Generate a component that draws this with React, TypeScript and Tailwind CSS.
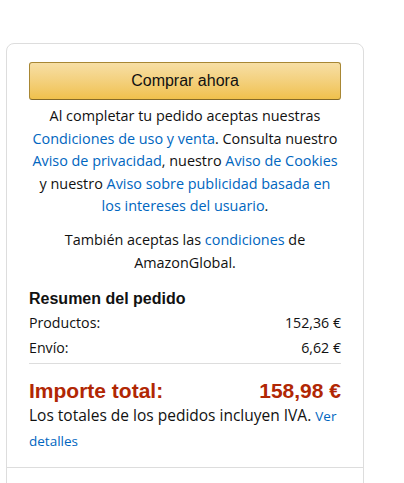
import React from 'react';

const link = 'text-[#0066c0]';

export default function App() {
  return (
    <div className="min-h-[483px] bg-white pt-[43px] pl-[6px]" style={{ fontFamily: '"Open Sans", sans-serif' }}>
      <div className="w-[358px] h-[460px] border border-[#dddddd] rounded-[8px] overflow-hidden">
        <div className="px-[22px] pt-[18px] pb-[14px]">
          {/* Buy button */}
          <button className="w-full h-[38px] rounded-[3px] border border-[#a88734] border-b-[#846a29] bg-gradient-to-b from-[#f7dfa5] to-[#f0c14b] text-[16px] text-[#111] font-['Liberation_Sans',Arial,sans-serif]">
            Comprar ahora
          </button>

          <p className="mt-[5px] text-center text-[14.4px] leading-[22.6px] text-[#111]">
            Al completar tu pedido aceptas nuestras{' '}
            <span className={link}>Condiciones de uso y venta</span>. Consulta nuestro{' '}
            <span className={link}>Aviso de privacidad</span>, nuestro{' '}
            <span className={link}>Aviso de Cookies</span> y nuestro{' '}
            <span className={link}>Aviso sobre publicidad basada en los intereses del usuario</span>.
          </p>

          <p className="mt-[11px] px-[30px] text-center text-[14.4px] leading-[22.6px] text-[#111]">
            También aceptas las <span className={link}>condiciones</span> de AmazonGlobal.
          </p>

          {/* Summary */}
          <h3 className="mt-[13px] text-[16px] font-bold text-[#111] font-['Liberation_Sans',Arial,sans-serif] leading-[24px]">
            Resumen del pedido
          </h3>
          <div className="border-b border-[#dddddd] pb-[3px]">
            <div className="flex justify-between text-[14.2px] leading-[24.5px] text-[#111]">
              <span>Productos:</span>
              <span>152,36 €</span>
            </div>
            <div className="flex justify-between text-[14.2px] leading-[24.5px] text-[#111]">
              <span>Envío:</span>
              <span>6,62 €</span>
            </div>
          </div>

          <div className="mt-[15px] flex justify-between text-[21px] font-bold text-[#B12704] font-['Liberation_Sans',Arial,sans-serif] leading-[24px]">
            <span>Importe total:</span>
            <span>158,98 €</span>
          </div>
          <p className="text-[15.5px] leading-[24px] text-[#111]">
            Los totales de los pedidos incluyen IVA. <span className={`${link} text-[13.5px]`}>Ver detalles</span>
          </p>
        </div>
        <div className="border-t border-[#dddddd]" />
      </div>
    </div>
  );
}
